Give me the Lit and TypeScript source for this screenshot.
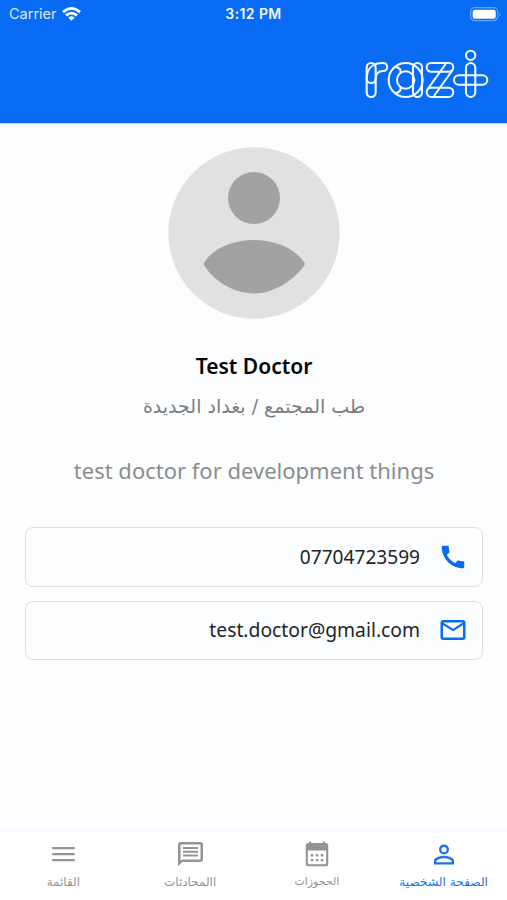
import { LitElement, html, css, svg } from "lit";
import { customElement } from "lit/decorators.js";
import { classMap } from "lit/directives/class-map.js";

const navItems = [
  {
    label: "القائمة",
    name: "menu",
    icon: svg`<path d="M3.400 6.300h18v1.900h-18zM3.400 11.100h18v1.900h-18zM3.400 15.900h18v1.900h-18z"/>`,
  },
  {
    label: "االمحادثات",
    name: "chats",
    icon: svg`<path transform="translate(.4 .3)" d="M4 4h16v12H5.170L4 17.170V4m0-2c-1.100 0-1.990.9-1.990 2L2 21.500l3.500-3.500H20c1.100 0 2-.9 2-2V4c0-1.100-.9-2-2-2H4zm2 10h12v1.700H6V12zm0-3h12v1.700H6V9zm0-3h12v1.700H6V6z"/>`,
  },
  {
    label: "الحجوزات",
    name: "bookings",
    icon: svg`<path fill-rule="evenodd" d="M5 3.200h.7V2h1.600v1.200h9.400V2h1.600v1.200h.7a2 2 0 0 1 2 2v14.600a2 2 0 0 1-2 2H5a2 2 0 0 1-2-2V5.200a2 2 0 0 1 2-2zM4.700 9.200v10.200q0 .8.8.8h13q.8 0 .8-.8V9.200zM7 12h2v1.900H7zm4 0h2v1.900h-2zm4 0h2v1.900h-2zM7 15.900h2v1.900H7zm4 0h2v1.900h-2zm4 0h2v1.900h-2z"/>`,
  },
  {
    label: "الصفحة الشخصية",
    name: "profile",
    icon: svg`<path transform="translate(0 .4)" d="M12 5.900a2.100 2.100 0 1 1 0 4.200 2.100 2.100 0 0 1 0-4.200m0 9c2.970 0 6.100 1.460 6.100 2.100v1.100H5.900V17c0-.64 3.130-2.100 6.100-2.100M12 4a4 4 0 1 0 0 8 4 4 0 0 0 0-8zm0 9c-2.670 0-8 1.340-8 4v3h16v-3c0-2.660-5.330-4-8-4z"/>`,
  },
];

@customElement("app-root")
class AppRoot extends LitElement {
  static styles = css`
    :host {
      display: flex;
      flex-direction: column;
      height: 900px;
      overflow: hidden;
      background: #fbfdff;
      font-family: "Noto Sans", "DejaVu Sans", sans-serif;
    }
    svg { display: block; flex: none; }
    .header {
      height: 124px;
      flex: none;
      background: #076bf3;
      color: #fff;
      border-bottom: 1px solid #b5d5fb;
      box-sizing: border-box;
    }
    .status {
      height: 28px;
      display: grid;
      grid-template-columns: 1fr auto 1fr;
      align-items: center;
      padding: 0 5px 0 9px;
      font: 14.500px/28px Inter, sans-serif;
    }
    .carrier { display: flex; align-items: center; gap: 5px; color: #dceaff; }
    .time {
      font-weight: 600;
      font-size: 14px;
      letter-spacing: 0.4px;
      margin-right: 4px;
      color: #f2f7ff;
    }
    .battery { justify-self: end; }
    .brand { display: flex; justify-content: flex-end; padding: 21px 18px 0 0; }
    .main {
      flex: 1;
      display: flex;
      flex-direction: column;
      align-items: center;
      padding: 23px 24px 0 25px;
    }
    .name {
      margin: 32px 0 0;
      font-size: 21px;
      line-height: 30px;
      font-weight: 600;
      color: #050505;
      white-space: nowrap;
    }
    .specialty {
      margin-top: 10px;
      font-family: "DejaVu Sans", sans-serif;
      font-size: 19px;
      line-height: 30px;
      color: #7c7e7e;
      white-space: nowrap;
    }
    .bio {
      margin-top: 33px;
      font-size: 22px;
      line-height: 32px;
      color: #8b8d8d;
      white-space: nowrap;
    }
    .contacts {
      align-self: stretch;
      display: flex;
      flex-direction: column;
      gap: 14px;
      margin-top: 41px;
    }
    .contact {
      height: 59.500px;
      box-sizing: border-box;
      border: 1px solid #dcdee0;
      border-radius: 8px;
      display: flex;
      align-items: center;
      justify-content: flex-end;
      gap: 18px;
      padding-right: 14px;
      line-height: 30px;
      color: #222426;
    }
    .phone { font-size: 19.100px; }
    .email { font-size: 19.300px; }
    .contact svg { fill: #076bf3; }
    .nav {
      height: 68px;
      flex: none;
      display: grid;
      grid-template-columns: repeat(4, 1fr);
      background: #fff;
      box-shadow: 0 -2px 6px rgba(150, 160, 180, 0.06);
    }
    .tab {
      display: flex;
      flex-direction: column;
      align-items: center;
      padding-top: 7px;
      gap: 5px;
      color: #949494;
      font: 12px/16px "DejaVu Sans", sans-serif;
      white-space: nowrap;
    }
    .bookings { font-size: 11px; }
    .tab svg { fill: currentColor; }
    .active { color: #1b74ea; font-size: 12.200px; }
  `;

  render() {
    return html`
      <header class="header">
        <div class="status">
          <div class="carrier">
            <span>Carrier</span>
            <svg width="19" height="14" viewBox="0 0 19 14" fill="none" stroke="#fff" stroke-width="2.800">
              <path d="M1 5.100Q9.500-2.300 18 5.100M4 8.400Q9.500 3.800 15 8.400"/>
              <path d="M6.300 10.700Q9.500 8 12.700 10.700L9.500 13.700z" fill="#fff" stroke="none"/>
            </svg>
          </div>
          <span class="time">3:12 PM</span>
          <svg class="battery" width="32" height="15" viewBox="0 0 32 15">
            <rect x=".7" y=".7" width="27" height="13" rx="4" fill="none" stroke="#65a5fa" stroke-width="1.200"/>
            <rect x="2.700" y="2.700" width="23" height="9" rx="2" fill="#fff"/>
            <path d="M29.500 5q2.200 2.500 0 5z" fill="#65a5fa"/>
          </svg>
        </div>
        <div class="brand">
          <svg width="125.300" height="50" viewBox="40 148 376 150" fill="none" stroke="#f4f9ff" stroke-width="6.200">
            <rect x="48" y="190" width="27" height="102" rx="13.500"/>
            <path d="M48 238C48 207 66 190 96 190C114 190 114 214 97 214C82 214 75 222 75 238C75 254 48 254 48 238z"/>
            <circle cx="165" cy="241" r="51"/>
            <circle cx="165" cy="241" r="26"/>
            <path d="M134 202Q154 205 149 220M134 280Q154 277 149 262"/>
            <rect x="187" y="190" width="27" height="102" rx="13.500"/>
            <rect x="228" y="190" width="80" height="26" rx="13"/>
            <rect x="228" y="264" width="80" height="28" rx="14"/>
            <path d="M285 193L230 270M306 211L250 289"/>
            <circle cx="360" cy="167" r="14"/>
            <rect x="346" y="190" width="28" height="102" rx="14"/>
            <rect x="310" y="227" width="100" height="28" rx="14"/>
          </svg>
        </div>
      </header>
      <main class="main">
        <svg width="172" height="172" viewBox="0 0 172 172">
          <circle cx="86" cy="86" r="85.700" fill="#e1e1e1"/>
          <circle cx="86" cy="51" r="26" fill="#a2a2a2"/>
          <path d="M35.500 117C43 102 64 93 86 93S129 102 137 117C130 129 109 146.500 86 146.500S43 131 35.500 117z" fill="#a2a2a2"/>
        </svg>
        <h1 class="name">Test Doctor</h1>
        <div class="specialty" dir="rtl">طب المجتمع / بغداد الجديدة</div>
        <div class="bio">test doctor for development things</div>
        <section class="contacts">
          <div class="contact">
            <span class="phone">07704723599</span>
            <svg width="30" height="30" viewBox="0 0 24 24"><path d="M20.010 15.380c-1.230 0-2.420-.2-3.530-.56-.35-.12-.74-.03-1.010.24l-1.570 1.970c-2.830-1.350-5.480-3.900-6.890-6.830l1.950-1.660c.27-.28.35-.67.24-1.020-.37-1.110-.56-2.300-.56-3.530 0-.54-.45-.99-.99-.99H4.190C3.650 3 3 3.240 3 3.990 3 13.280 10.730 21 20.010 21c.71 0 .99-.63.99-1.180v-3.450c0-.54-.45-.99-.99-.99z"/></svg>
          </div>
          <div class="contact">
            <span class="email">test.doctor@gmail.com</span>
            <svg width="30" height="30" viewBox="0 0 24 24"><path d="M22 6c0-1.100-.9-2-2-2H4c-1.100 0-2 .9-2 2v12c0 1.100.9 2 2 2h16c1.100 0 2-.9 2-2V6zm-2 0l-8 5-8-5h16zm0 12H4V8l8 5 8-5v10z"/></svg>
          </div>
        </section>
      </main>
      <nav class="nav">
        ${navItems.map(
          (item) => html`
            <div class=${classMap({ tab: true, [item.name]: true, active: item.name === "profile" })} dir="rtl">
              <svg width="30" height="30" viewBox="0 0 24 24">${item.icon}</svg>
              <span>${item.label}</span>
            </div>
          `
        )}
      </nav>
    `;
  }
}
